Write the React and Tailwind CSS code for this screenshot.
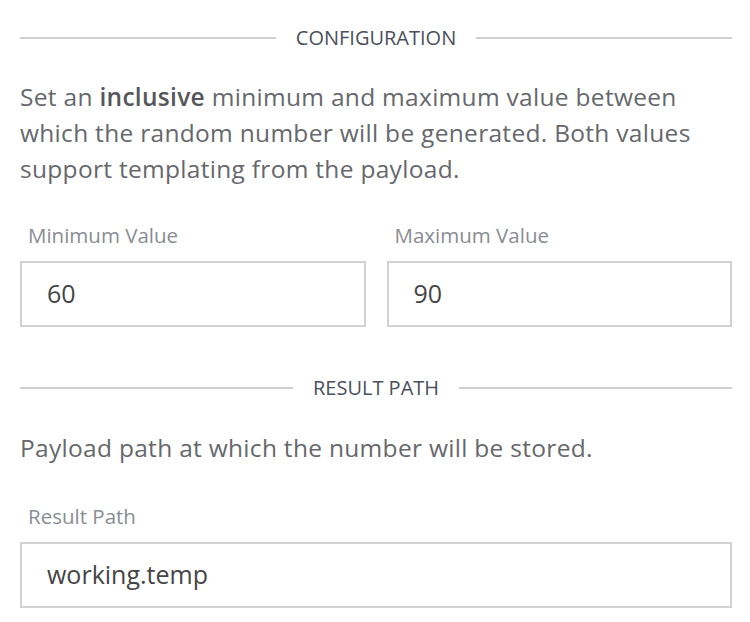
export default function App() {
  const font = { fontFamily: '"Open Sans", "Noto Sans", sans-serif' };
  const Divider = ({ label, className }) => (
    <div className={`flex items-center gap-5 h-7 ${className}`}>
      <div className="flex-1 h-[2px] bg-[#d0d0d0]" />
      <span className="text-[20px] leading-7 text-[#4b505c]">{label}</span>
      <div className="flex-1 h-[2px] bg-[#d0d0d0]" />
    </div>
  );
  const Field = ({ label, value, className }) => (
    <div className={`flex flex-col ${className}`}>
      <span className="h-7 leading-7 text-[20.5px] text-[#8a8d93] pl-2">{label}</span>
      <div className="mt-3 h-[66px] border-2 border-[#d2d2d2] flex items-center pl-[25px] text-[25px] text-[#454545] bg-white">
        {value}
      </div>
    </div>
  );
  return (
    <div className="w-[750px] h-[622px] bg-white pl-5 pr-[18px] pt-6" style={font}>
      <Divider label="CONFIGURATION" />
      <p className="mt-[27px] text-[24.5px] leading-9 tracking-[0.3px] text-[#66686c]">
        Set an <b className="font-semibold text-[#55575b]">inclusive</b> minimum and maximum value between which the random number will be generated. Both values support templating from the payload.
      </p>
      <div className="grid grid-cols-2 gap-[21px] mt-[34px]">
        <Field label="Minimum Value" value="60" />
        <Field label="Maximum Value" value="90" />
      </div>
      <Divider label="RESULT PATH" className="mt-[47px]" />
      <p className="mt-[28px] text-[24.5px] leading-9 tracking-[0.3px] text-[#66686c]">
        Payload path at which the number will be stored.
      </p>
      <Field label="Result Path" value="working.temp" className="mt-[36px]" />
    </div>
  );
}
